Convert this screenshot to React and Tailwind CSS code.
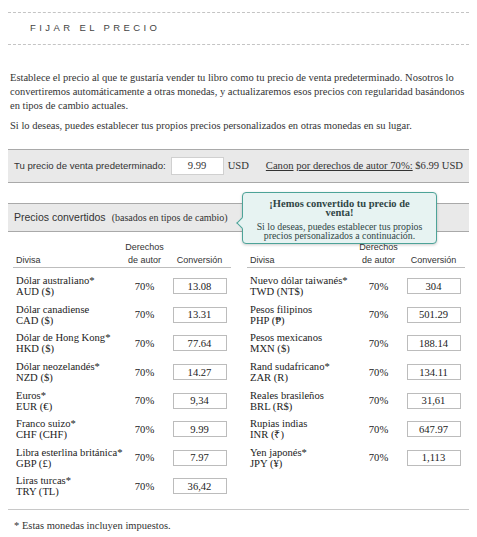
import React from "react";

const serif = "font-['Liberation_Serif',serif]";
const sans = "font-['Liberation_Sans',Arial,sans-serif]";

const left = [
  ["Dólar australiano*", "AUD ($)", "13.08"],
  ["Dólar canadiense", "CAD ($)", "13.31"],
  ["Dólar de Hong Kong*", "HKD ($)", "77.64"],
  ["Dólar neozelandés*", "NZD ($)", "14.27"],
  ["Euros*", "EUR (€)", "9,34"],
  ["Franco suizo*", "CHF (CHF)", "9.99"],
  ["Libra esterlina británica*", "GBP (£)", "7.97"],
  ["Liras turcas*", "TRY (TL)", "36,42"],
];

const right = [
  ["Nuevo dólar taiwanés*", "TWD (NT$)", "304"],
  ["Pesos filipinos", "PHP (₱)", "501.29"],
  ["Pesos mexicanos", "MXN ($)", "188.14"],
  ["Rand sudafricano*", "ZAR (R)", "134.11"],
  ["Reales brasileños", "BRL (R$)", "31,61"],
  ["Rupias indias", "INR (₹)", "647.97"],
  ["Yen japonés*", "JPY (¥)", "1,113"],
];

function PriceTable({ rows }) {
  return (
    <div>
      <div className={`grid grid-cols-[108px_47px_63px] items-end border-b border-[#bdbdbd] text-[9px] leading-[13px] text-[#333] ${sans}`}>
        <div className="pl-[3px]">Divisa</div>
        <div className="text-center">Derechos<br />de autor</div>
        <div className="text-center">Conversión</div>
      </div>
      <div className="pt-[4px]">
        {rows.map(([name, code, val]) => (
          <div key={code} className={`grid grid-cols-[108px_47px_63px] items-center h-[28.6px] text-[10.6px] leading-[11px] text-[#222] ${serif}`}>
            <div className="pl-[3px] whitespace-nowrap">
              <div>{name}</div>
              <div>{code}</div>
            </div>
            <div className="text-center">70%</div>
            <div className="flex justify-center">
              <div className="w-[54px] h-[16px] border border-[#bcbcbc] bg-white flex items-center justify-center">{val}</div>
            </div>
          </div>
        ))}
      </div>
    </div>
  );
}

export default function App() {
  return (
    <div className="bg-white w-[477px] h-[537px] px-2 pt-3 text-[#333]">
      <div className="border-y border-dashed border-[#c4c4c4] h-[33px] flex items-center pl-[22px]">
        <span className={`${sans} text-[9.5px] tracking-[3.4px] text-[#444]`}>FIJAR EL PRECIO</span>
      </div>

      <div className={`${serif} text-[10.5px] leading-[14px] text-[#333] px-[2px] mt-[26px]`}>
        <p>Establece el precio al que te gustaría vender tu libro como tu precio de venta predeterminado. Nosotros lo convertiremos automáticamente a otras monedas, y actualizaremos esos precios con regularidad basándonos en tipos de cambio actuales.</p>
        <p className="mt-[6px]">Si lo deseas, puedes establecer tus propios precios personalizados en otras monedas en su lugar.</p>
      </div>

      <div className="mt-[16px] h-[34px] bg-[#e9e9e9] border-y border-[#a9a9a9] flex items-center px-[6px] whitespace-nowrap">
        <span className={`${sans} text-[9.6px]`}>Tu precio de venta predeterminado:</span>
        <div className={`${serif} ml-[5px] w-[53px] h-[18px] bg-white border border-[#d0d0d0] flex items-center justify-center text-[10.6px]`}>9.99</div>
        <span className={`${serif} ml-[4px] text-[10.6px]`}>USD</span>
        <span className={`${serif} ml-auto text-[10.6px]`}>
          <span className="underline">Canon</span> <span className="underline">por derechos de autor 70%:</span> $6.99 USD
        </span>
      </div>

      <div className="relative mt-[20px] h-[29px] bg-[#e9e9e9] border-y border-[#a9a9a9] flex items-center px-[6px] whitespace-nowrap">
        <span className={`${sans} text-[10.5px]`}>Precios convertidos</span>
        <span className={`${serif} text-[10px] ml-[6px]`}>(basados en tipos de cambio)</span>

        <div className="absolute left-[234px] top-[-12px] w-[195px] h-[52px] rounded-[4px] border border-[#4da398] bg-[#e7f3f2] shadow-[0_1px_3px_rgba(0,0,0,0.2)] px-2 pt-[6px] text-center text-[#2f4545]">
          <div className={`${serif} font-bold text-[10.5px] leading-[9px]`}>¡Hemos convertido tu precio de<br />venta!</div>
          <div className={`${serif} text-[9.8px] leading-[9px] mt-[5px]`}>Si lo deseas, puedes establecer tus propios<br />precios personalizados a continuación.</div>
          <div className="absolute left-[-5px] top-[26px] w-[8px] h-[8px] rotate-45 bg-[#e7f3f2] border-l border-b border-[#4da398]" />
        </div>
      </div>

      <div className="grid grid-cols-[218px_218px] gap-[16px] px-[5px] mt-[9px]">
        <PriceTable rows={left} />
        <PriceTable rows={right} />
      </div>

      <div className="border-t border-[#c8c8c8] mt-[8px]" />
      <p className={`${serif} text-[10.5px] leading-[15px] mt-[8px] pl-[6px] text-[#333]`}>* Estas monedas incluyen impuestos.</p>
    </div>
  );
}
